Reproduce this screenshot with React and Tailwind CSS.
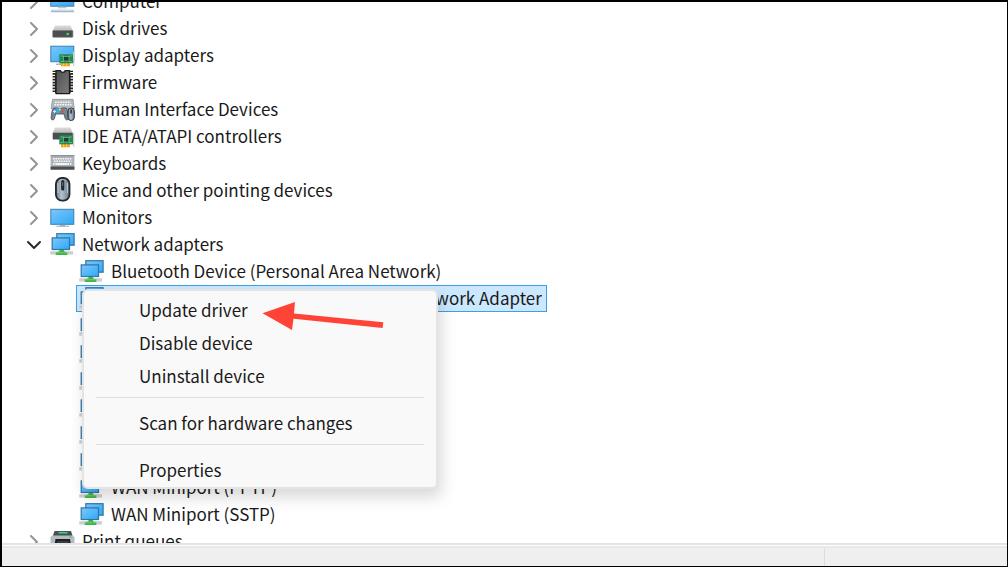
import { useState } from 'react'
import { ChevronDown, ChevronRight } from 'lucide-react'

function Gradients() {
  return (
    <svg className="absolute w-0 h-0" aria-hidden="true">
      <defs>
        <linearGradient id="screen" x1="0" y1="0" x2="1" y2="1">
          <stop offset="0" stopColor="#7cc8fb" />
          <stop offset="1" stopColor="#2fa8f6" />
        </linearGradient>
        <linearGradient id="chip" x1="0" y1="0" x2="1" y2="1">
          <stop offset="0" stopColor="#505050" />
          <stop offset="1" stopColor="#7c7c7c" />
        </linearGradient>
        <linearGradient id="lid" x1="0" y1="0" x2="0" y2="1">
          <stop offset="0" stopColor="#dcdcdc" />
          <stop offset="1" stopColor="#bcbcbc" />
        </linearGradient>
        <linearGradient id="mouse" x1="0" y1="0" x2="1" y2="0">
          <stop offset="0" stopColor="#6b7684" />
          <stop offset="0.4" stopColor="#b3c1d2" />
          <stop offset="1" stopColor="#6b7887" />
        </linearGradient>
      </defs>
    </svg>
  )
}

function Icon({ children }) {
  return (
    <svg className="w-[26px] h-[27px] shrink-0" viewBox="0 0 26 27" fill="none" aria-hidden="true">
      {children}
    </svg>
  )
}

// Green expansion card, shared by the display and IDE icons
function Card() {
  return (
    <>
      <rect x="11" y="21" width="9" height="3.3" fill="#f5a51c" />
      <path d="M13.5 21v2.6M16.5 21v2.6" stroke="#ffd27a" strokeWidth="0.8" />
      <rect x="9.3" y="12.3" width="14" height="9" fill="#1f8a4c" />
      <path d="M10.5 14h3M10.5 19.5h3M19 14h3M19 19.5h3" stroke="#6fc48f" strokeWidth="0.8" />
      <rect x="13.5" y="14.6" width="5.5" height="4.4" fill="#1d3f33" stroke="#8fc7a4" strokeWidth="0.6" />
      <path d="M22.8 9.7h1.5v14.6h-1z" fill="#c9ccce" />
    </>
  )
}

function ComputerIcon() {
  return (
    <Icon>
      <rect x="0.8" y="3" width="23" height="15.2" fill="url(#screen)" stroke="#3f7fae" />
      <path d="M8.5 18.7h7.5l1 1.6H7.5z" fill="#b9c4ce" />
      <path d="M2 21.8h21l1.5 2.5h-24z" fill="#a3b7cb" />
      <path d="M2.5 22.5h20" stroke="#d6e1ec" strokeWidth="0.8" />
    </Icon>
  )
}

function DiskIcon() {
  return (
    <Icon>
      <path d="M5 10.5h15.5l2.3 5.5H2.7z" fill="url(#lid)" />
      <rect x="2.7" y="15.5" width="20.2" height="6.8" rx="0.8" fill="#4b4e50" stroke="#77797b" strokeWidth="0.6" />
      <circle cx="17.7" cy="19" r="1.3" fill="#3fe052" />
    </Icon>
  )
}

function DisplayIcon() {
  return (
    <Icon>
      <rect x="0.8" y="4.2" width="23" height="15.5" fill="url(#screen)" stroke="#3f7fae" />
      <path d="M6 22.3h5" stroke="#a9b7c4" strokeWidth="1.5" />
      <Card />
    </Icon>
  )
}

function FirmwareIcon() {
  return (
    <Icon>
      <path d="M4.3 4v20M21.3 4v20" stroke="#222" strokeWidth="3.4" strokeDasharray="1.7 1.2" />
      <path d="M5.5 4v20M20.2 4v20" stroke="#333" />
      <path d="M6 1.7h4.3c.3 2.3 4.6 2.3 4.9 0h4.3v23H6z" fill="url(#chip)" stroke="#1c1c1c" strokeWidth="1.3" />
      <path d="M2.6 2.4H6M19.5 2.4H23" stroke="#222" strokeWidth="1.4" />
    </Icon>
  )
}

function HidIcon() {
  return (
    <Icon>
      <path d="M2.5 3.3H23l1.3 9.5H1z" fill="#b4b9bd" stroke="#858c91" strokeWidth="0.7" />
      <path d="M5 6.3h16M4.5 8.8h17" stroke="#f8f8f8" strokeWidth="1.4" strokeDasharray="1.7 0.9" />
      <path
        d="M3.8 12h3.7l1.5 1h2l1.5-1h3.7c1.5 1.5 2.1 6 2.1 11-.9 1.3-2.1 1.3-3-.2L14 18H5.6l-1.3 4.8c-.8 1.5-2.3 1.5-3.1.2 0-5 .9-9.5 2.6-11z"
        fill="#7b8693"
        stroke="#3f4852"
        strokeWidth="0.8"
      />
      <circle cx="7.7" cy="14.8" r="2.7" fill="#35a8f2" />
      <path d="M3 15.5h3M4.5 14v3" stroke="#dfe7ee" />
      <circle cx="9.8" cy="13.5" r="1.1" fill="#ffd23d" />
      <circle cx="12.3" cy="15.5" r="1.3" fill="#e04a36" />
      <rect x="18" y="12" width="6.3" height="12.5" rx="3.1" fill="url(#mouse)" stroke="#2e353c" />
      <path d="M21.1 13.5v4" stroke="#22272c" strokeWidth="1.5" />
    </Icon>
  )
}

function IdeIcon() {
  return (
    <Icon>
      <path d="M5 4.5h15.5l2.3 5.5H2.7z" fill="url(#lid)" />
      <rect x="2.7" y="9.7" width="20.2" height="6.8" rx="0.8" fill="#4b4e50" />
      <Card />
    </Icon>
  )
}

function KeyboardIcon() {
  return (
    <Icon>
      <rect x="0.6" y="5.3" width="23.8" height="14.2" fill="#adb3b8" />
      <path d="M0.6 5.7h23.8" stroke="#7e868d" />
      <path d="M3 8.7h19M4 11.3h17.5M3 13.9h19" stroke="#fafbfb" strokeWidth="1.6" strokeDasharray="1.6 0.8" />
      <path d="M6.5 14h11" stroke="#fafbfb" strokeWidth="1.6" />
      <rect x="0.6" y="16.5" width="23.8" height="3.2" fill="#4b5157" />
    </Icon>
  )
}

function MouseIcon() {
  return (
    <Icon>
      <rect x="5.9" y="1" width="13.6" height="22.6" rx="6" fill="url(#mouse)" stroke="#23282d" strokeWidth="1.8" />
      <path d="M8 6v10M17.4 6v10" stroke="#d3dbe4" strokeWidth="0.8" />
      <rect x="11.1" y="3" width="3.2" height="10.5" rx="1.5" fill="#23282d" />
      <path d="M12.7 5v4" stroke="#606a74" />
    </Icon>
  )
}

function MonitorIcon() {
  return (
    <Icon>
      <rect x="0.8" y="5.3" width="23" height="15" fill="url(#screen)" stroke="#3f7fae" />
      <path d="M10 20.8h5V22h-5z" fill="#8fa3b4" />
      <path d="M6.5 22.3H19" stroke="#a9bccf" strokeWidth="1.3" />
    </Icon>
  )
}

function NetworkIcon() {
  return (
    <Icon>
      <rect x="0.3" y="20" width="22.7" height="3.8" fill="#dadada" />
      <path d="M0.3 21.9H23" stroke="#bdbdbd" strokeWidth="0.8" />
      <rect x="6.8" y="2.7" width="17.3" height="11.5" fill="url(#screen)" stroke="#2f75a6" strokeWidth="1.2" />
      <path d="M9.5 18.5H14v1.7l3.3 1.3v2.6H5.8v-2.6l3.7-1.3z" fill="#43b649" />
      <path d="M5.8 21.7h11.5" stroke="#7fd67f" strokeWidth="0.7" />
      <rect x="2.2" y="6.9" width="17.3" height="11.6" fill="url(#screen)" stroke="#2f75a6" strokeWidth="1.2" />
    </Icon>
  )
}

function PrinterIcon() {
  return (
    <Icon>
      <path d="M2.5 7.5 4 6h17l1.5 1.5 2 1.5v18h-24V9z" fill="#b6bcc2" />
      <path d="M4.5 3H21l1.5 4.5H3z" fill="#4a4f54" />
      <path d="M8.5 4.7h9" stroke="#39d678" strokeWidth="1.6" />
      <rect x="19" y="8.3" width="2.5" height="1.4" fill="#39d678" />
      <path d="M5.5 11H20l.8 5H4.7z" fill="#1d2023" />
      <path d="M7 14h11.5" stroke="#555b61" />
    </Icon>
  )
}

const SELECTED = 'Qualcomm Atheros AR9485x Wireless Network Adapter'

const categories = [
  { label: 'Computer', icon: ComputerIcon },
  { label: 'Disk drives', icon: DiskIcon },
  { label: 'Display adapters', icon: DisplayIcon },
  { label: 'Firmware', icon: FirmwareIcon },
  { label: 'Human Interface Devices', icon: HidIcon },
  { label: 'IDE ATA/ATAPI controllers', icon: IdeIcon },
  { label: 'Keyboards', icon: KeyboardIcon },
  { label: 'Mice and other pointing devices', icon: MouseIcon },
  { label: 'Monitors', icon: MonitorIcon },
  {
    label: 'Network adapters',
    icon: NetworkIcon,
    devices: [
      'Bluetooth Device (Personal Area Network)',
      SELECTED,
      'WAN Miniport (IKEv2)',
      'WAN Miniport (IP)',
      'WAN Miniport (IPv6)',
      'WAN Miniport (L2TP)',
      'WAN Miniport (Network Monitor)',
      'WAN Miniport (PPPOE)',
      'WAN Miniport (PPTP)',
      'WAN Miniport (SSTP)',
    ],
  },
  { label: 'Print queues', icon: PrinterIcon },
]

const menuGroups = [
  ['Update driver', 'Disable device', 'Uninstall device'],
  ['Scan for hardware changes'],
  ['Properties'],
]

function ContextMenu() {
  return (
    <div
      role="menu"
      className="absolute z-10 left-[6px] top-1 w-[356px] rounded-md border-2 border-[#e4e4e4] bg-[#f9f9f9] pt-[3px] shadow-[3px_8px_16px_rgba(0,0,0,0.16)]"
    >
      {menuGroups.map((group, i) => (
        <div key={group[0]} className={i > 0 ? 'mt-1' : ''}>
          {i > 0 && <div role="separator" className="mx-3 mb-[9px] h-px bg-[#dedede]" />}
          {group.map(item => (
            <button
              key={item}
              type="button"
              role="menuitem"
              className="block w-full h-[33px] pl-[55px] pb-0.5 text-left hover:bg-[#f0f0f0]"
            >
              {item}
            </button>
          ))}
        </div>
      ))}
      <svg className="absolute left-[178px] top-[9px] w-[124px] h-8" viewBox="0 0 124 32" aria-hidden="true">
        <path d="M0.5 13.3 33 2l-1 11.5 89.3 8.8-.7 5.7L31.500 18.800 30 30z" fill="#ff4336" />
      </svg>
    </div>
  )
}

function Device({ name, selected }) {
  return (
    <li className="relative flex">
      <div
        className={`flex items-center gap-[6px] h-[27px] border pl-[2px] pr-1 whitespace-nowrap ${
          selected ? 'border-[#3c9fe8] bg-[#cce8ff]' : 'border-transparent'
        }`}
      >
        <NetworkIcon />
        <span className="pb-0.5">{name}</span>
      </div>
      {selected && <ContextMenu />}
    </li>
  )
}

function Category({ category }) {
  const [open, setOpen] = useState(Boolean(category.devices))
  const CategoryIcon = category.icon
  return (
    <li>
      <div className="flex items-center h-[27px] whitespace-nowrap">
        <button type="button" aria-label={`Toggle ${category.label}`} onClick={() => setOpen(!open)} className="mr-1">
          {open ? (
            <ChevronDown className="w-6 h-6 text-[#2b2b2b]" strokeWidth={2} />
          ) : (
            <ChevronRight className="w-6 h-6 text-[#949494]" strokeWidth={2} />
          )}
        </button>
        <CategoryIcon />
        <span className="ml-[6px] pb-0.5">{category.label}</span>
      </div>
      {open && category.devices && (
        <ul className="pl-[54px]">
          {category.devices.map(name => (
            <Device key={name} name={name} selected={name === SELECTED} />
          ))}
        </ul>
      )}
    </li>
  )
}

export default function App() {
  return (
    <div className="flex flex-col h-screen border-t-2 border-l-2 border-r border-b border-black bg-white font-['Noto_Sans_CJK_SC','Open_Sans',sans-serif] text-[17px] leading-[27px] text-[#1a1a1a]">
      <Gradients />
      <main className="flex-1 min-h-0 overflow-hidden">
        {/* list is scrolled by half a row */}
        <ul className="-mt-[14px] pl-5">
          {categories.map(c => (
            <Category key={c.label} category={c} />
          ))}
        </ul>
      </main>
      <footer className="shrink-0 border-t-2 border-[#e3e3e3] bg-white pt-px">
        <div className="flex h-5 border-t-2 border-[#e8e8e8] bg-[#efefef]">
          <div className="flex-1 border-r border-[#dcdcdc]" />
          <div className="w-[182px]" />
        </div>
      </footer>
    </div>
  )
}
